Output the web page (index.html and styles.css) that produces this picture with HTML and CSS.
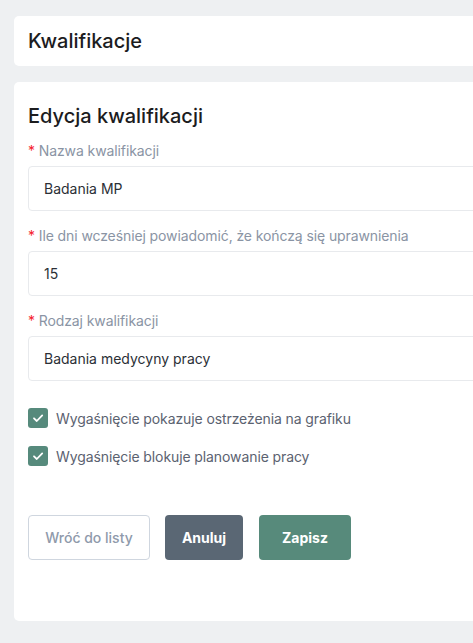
FILE: index.html
```html
<!DOCTYPE html>
<html lang="pl">
<head>
<meta charset="utf-8">
<link rel="stylesheet" href="styles.css">
</head>
<body>
<div class="page">
  <div class="card header-card">
    <h1 class="page-title">Kwalifikacje</h1>
  </div>
  <div class="card form-card">
    <h2 class="form-title">Edycja kwalifikacji</h2>
    <div class="field">
      <label class="label"><span class="req">*</span> Nazwa kwalifikacji</label>
      <div class="input">Badania MP</div>
    </div>
    <div class="field">
      <label class="label"><span class="req">*</span> Ile dni wcześniej powiadomić, że kończą się uprawnienia</label>
      <div class="input">15</div>
    </div>
    <div class="field">
      <label class="label"><span class="req">*</span> Rodzaj kwalifikacji</label>
      <div class="input">Badania medycyny pracy</div>
    </div>
    <div class="checks">
      <div class="check-row">
        <span class="checkbox"><svg viewBox="0 0 20 20" width="20" height="20"><path d="M6 10.3l2.8 2.7L14.2 7.4" fill="none" stroke="#fff" stroke-width="1.8" stroke-linecap="round" stroke-linejoin="round"/></svg></span>
        <span class="check-label">Wygaśnięcie pokazuje ostrzeżenia na grafiku</span>
      </div>
      <div class="check-row">
        <span class="checkbox"><svg viewBox="0 0 20 20" width="20" height="20"><path d="M6 10.3l2.8 2.7L14.2 7.4" fill="none" stroke="#fff" stroke-width="1.8" stroke-linecap="round" stroke-linejoin="round"/></svg></span>
        <span class="check-label">Wygaśnięcie blokuje planowanie pracy</span>
      </div>
    </div>
    <div class="actions">
      <button class="btn btn-outline">Wróć do listy</button>
      <button class="btn btn-dark">Anuluj</button>
      <button class="btn btn-green">Zapisz</button>
    </div>
  </div>
</div>
</body>
</html>
```

FILE: styles.css
```css
html, body {
  margin: 0;
  padding: 0;
  overflow: hidden;
  background: #eef0f2;
  font-family: Inter, "Noto Sans", sans-serif;
}
.page {
  padding: 16px 0 0 14px;
  width: 620px;
  display: flex;
  flex-direction: column;
  gap: 16px;
}
.card {
  background: #fff;
  border-radius: 5px;
}
.header-card {
  height: 50px;
  display: flex;
  align-items: center;
  padding-left: 14px;
}
.page-title {
  margin: 0;
  font-size: 20px;
  font-weight: 500;
  color: #1c1c1e;
}
.form-card {
  padding: 20px 14px 61px 14px;
}
.form-title {
  margin: 0 0 11px 0;
  font-size: 20px;
  line-height: 28px;
  font-weight: 500;
  color: #1c1c1e;
}
.field {
  display: flex;
  flex-direction: column;
  gap: 5px;
  margin-bottom: 15px;
}
.label {
  font-size: 14px;
  line-height: 20px;
  color: #8a94a4;
  letter-spacing: -0.1px;
}
.req {
  color: #f5222d;
}
.input {
  height: 45px;
  box-sizing: border-box;
  border: 1px solid #e8eaed;
  border-radius: 4px;
  padding: 0 15px;
  display: flex;
  align-items: center;
  font-size: 14px;
  color: #2b2f36;
}
.checks {
  margin-top: 27px;
  display: flex;
  flex-direction: column;
  gap: 18px;
}
.check-row {
  display: flex;
  align-items: center;
  gap: 8px;
}
.checkbox {
  width: 20px;
  height: 20px;
  border-radius: 3px;
  background: #568a7c;
  display: flex;
}
.check-label {
  font-size: 14px;
  color: #5b6270;
  letter-spacing: -0.1px;
}
.actions {
  margin-top: 49px;
  display: flex;
  gap: 15px;
}
.btn {
  height: 45px;
  border-radius: 4px;
  font-family: Inter, "Noto Sans", sans-serif;
  font-size: 14px;
  border: 1px solid transparent;
  padding: 0;
  cursor: pointer;
}
.btn-outline {
  width: 122px;
  background: #fff;
  border-color: #cfd6df;
  color: #8f9aab;
  font-weight: 500;
}
.btn-dark {
  width: 78px;
  background: #5a6774;
  color: #fff;
  font-weight: 700;
}
.btn-green {
  width: 92px;
  background: #578a7b;
  color: #fff;
  font-weight: 700;
  margin-left: 1px;
}
```
